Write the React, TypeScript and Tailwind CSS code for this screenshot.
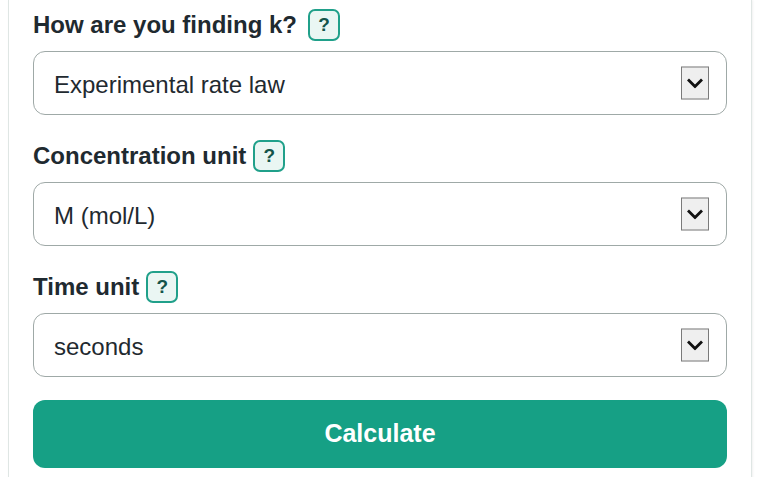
import { useState } from "react";

type Field = {
  label: string;
  options: string[];
  wide?: boolean;
};

const fields: Field[] = [
  {
    label: "How are you finding k?",
    options: ["Experimental rate law", "Integrated rate law", "Half-life"],
    wide: true,
  },
  { label: "Concentration unit", options: ["M (mol/L)", "mM", "µM"] },
  { label: "Time unit", options: ["seconds", "minutes", "hours"] },
];

function HelpBadge({ wide }: { wide?: boolean }) {
  return (
    <span
      className={`flex h-8 w-8 items-center justify-center rounded-[7px] border-2 border-[#20a08a] bg-[#eaf6f3] text-[19px] font-bold text-[#14544a] ${
        wide ? "ml-[11px]" : "ml-[7px]"
      }`}
    >
      ?
    </span>
  );
}

function SelectField({ field }: { field: Field }) {
  const [value, setValue] = useState(field.options[0]);
  return (
    <div>
      <div className="flex h-8 items-center">
        <span className="text-[24px] font-bold text-[#1f2a30]">{field.label}</span>
        <HelpBadge wide={field.wide} />
      </div>
      <div className="relative mt-[10px]">
        <select
          value={value}
          onChange={(e) => setValue(e.target.value)}
          className="h-16 w-full appearance-none rounded-xl border-[1.5px] border-[#9fa9a7] bg-white pl-5 pt-1 text-[24px] text-[#1f2a30] outline-none"
        >
          {field.options.map((o) => (
            <option key={o}>{o}</option>
          ))}
        </select>
        <span className="pointer-events-none absolute right-[18px] top-1/2 flex h-[33px] w-[28px] -translate-y-1/2 items-center justify-center border-[1.5px] border-[#7a7a7a] bg-[#efefef]">
          <svg width="18" height="11" viewBox="0 0 18 11">
            <path d="M2 2 L9 9 L16 2" fill="none" stroke="#111" strokeWidth="2.8" />
          </svg>
        </span>
      </div>
    </div>
  );
}

export default function App() {
  return (
    <div className="h-[477px] overflow-hidden bg-white px-2 font-['Liberation_Sans',Arial,sans-serif]">
      <div className="h-[520px] border-x-[1.5px] border-[#dfe6e4] bg-white px-6 pt-[9px] shadow-[1px_0_2px_rgba(0,0,0,0.06)]">
        <div className="flex flex-col gap-[25px]">
          {fields.map((f) => (
            <SelectField key={f.label} field={f} />
          ))}
        </div>
        <button className="mt-[23px] h-[68px] w-full rounded-xl bg-[#16a085] text-[25px] font-bold text-white">
          Calculate
        </button>
      </div>
    </div>
  );
}
